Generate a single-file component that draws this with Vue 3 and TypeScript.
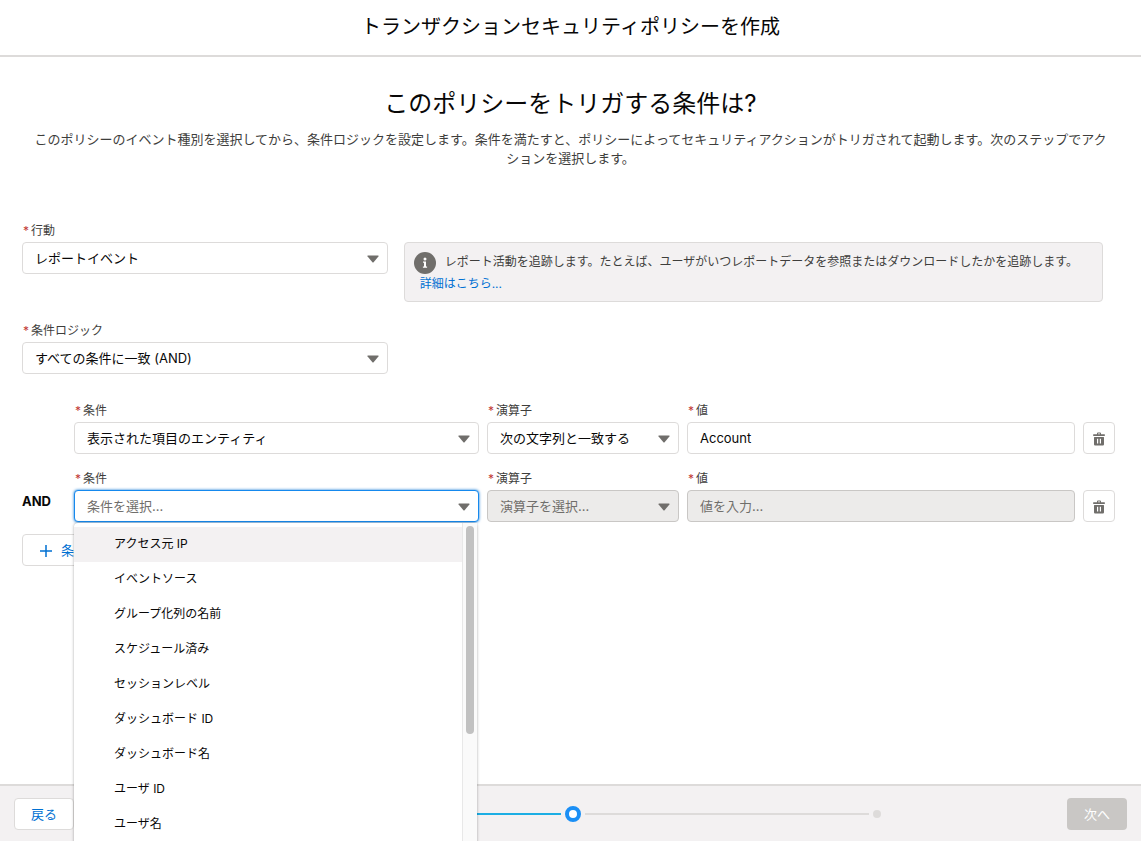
<script setup lang="ts">
import { ref } from 'vue'

interface Condition {
  id: number
  joiner: string
  field: string
  operator: string
  value: string
  open: boolean
}

const action = ref('レポートイベント')
const logic = ref('すべての条件に一致 (AND)')

const conditions = ref<Condition[]>([
  { id: 1, joiner: '', field: '表示された項目のエンティティ', operator: '次の文字列と一致する', value: 'Account', open: false },
  { id: 2, joiner: 'AND', field: '', operator: '', value: '', open: true },
])

const fields: string[] = [
  'アクセス元 IP',
  'イベントソース',
  'グループ化列の名前',
  'スケジュール済み',
  'セッションレベル',
  'ダッシュボード ID',
  'ダッシュボード名',
  'ユーザ ID',
  'ユーザ名',
]

const highlighted = ref(0)

function choose(condition: Condition, name: string) {
  condition.field = name
  condition.open = false
}

function remove(id: number) {
  conditions.value = conditions.value.filter((c) => c.id !== id)
}

function add() {
  conditions.value.push({ id: Date.now(), joiner: 'AND', field: '', operator: '', value: '', open: false })
}
</script>

<template>
  <div class="page">
    <header class="top">
      <h1>トランザクションセキュリティポリシーを作成</h1>
    </header>

    <main class="content">
      <h2>このポリシーをトリガする条件は?</h2>
      <p class="lead">このポリシーのイベント種別を選択してから、条件ロジックを設定します。条件を満たすと、ポリシーによってセキュリティアクションがトリガされて起動します。次のステップでアクションを選択します。</p>

      <form class="form" @submit.prevent>
        <div class="row">
          <div class="field third">
            <label for="action"><span class="req">*</span>行動</label>
            <div class="control">
              <select id="action" v-model="action">
                <option>レポートイベント</option>
              </select>
              <svg class="caret" viewBox="0 0 12 8" aria-hidden="true"><path d="M1 .5h10c.5 0 .7.5.4.9L6.6 7.2a.8.8 0 0 1-1.2 0L.6 1.4C.3 1 .5.5 1 .5z" /></svg>
            </div>
          </div>
          <aside class="info">
            <div class="info-line">
              <svg class="info-icon" viewBox="0 0 22 22" aria-hidden="true">
                <circle cx="11" cy="11" r="11" fill="#706e6b" />
                <circle cx="11" cy="6.9" r="1.5" fill="#fff" />
                <path d="M9 9.5h3v5h1.1v1.3H8.900v-1.300H10v-3.700H9z" fill="#fff" />
              </svg>
              <p>レポート活動を追跡します。たとえば、ユーザがいつレポートデータを参照またはダウンロードしたかを追跡します。</p>
            </div>
            <a href="#">詳細はこちら...</a>
          </aside>
        </div>

        <div class="row">
          <div class="field third">
            <label for="logic"><span class="req">*</span>条件ロジック</label>
            <div class="control">
              <select id="logic" v-model="logic">
                <option>すべての条件に一致 (AND)</option>
              </select>
              <svg class="caret" viewBox="0 0 12 8" aria-hidden="true"><path d="M1 .5h10c.5 0 .7.5.4.9L6.6 7.2a.8.8 0 0 1-1.2 0L.6 1.4C.3 1 .5.5 1 .5z" /></svg>
            </div>
          </div>
        </div>

        <div class="conditions">
          <div v-for="c in conditions" :key="c.id" class="condition">
            <span class="joiner">{{ c.joiner }}</span>
            <div class="field">
              <label :for="`field-${c.id}`"><span class="req">*</span>条件</label>
              <div class="control">
                <select :id="`field-${c.id}`" v-model="c.field" :class="{ active: c.open, empty: !c.field }">
                  <option value="">条件を選択...</option>
                  <option>表示された項目のエンティティ</option>
                  <option v-for="f in fields" :key="f">{{ f }}</option>
                </select>
                <svg class="caret" viewBox="0 0 12 8" aria-hidden="true"><path d="M1 .5h10c.5 0 .7.5.4.9L6.6 7.2a.8.8 0 0 1-1.2 0L.6 1.4C.3 1 .5.5 1 .5z" /></svg>
                <div v-if="c.open" class="menu">
                  <ul role="listbox" aria-label="条件">
                    <li
                      v-for="(f, i) in fields"
                      :key="f"
                      role="option"
                      :aria-selected="i === highlighted"
                      :class="{ highlighted: i === highlighted }"
                      @mouseenter="highlighted = i"
                      @click="choose(c, f)"
                    >{{ f }}</li>
                  </ul>
                  <div class="track"><div class="thumb"></div></div>
                </div>
              </div>
            </div>
            <div class="field">
              <label :for="`operator-${c.id}`"><span class="req">*</span>演算子</label>
              <div class="control">
                <select :id="`operator-${c.id}`" v-model="c.operator" :disabled="!c.field">
                  <option value="">演算子を選択...</option>
                  <option>次の文字列と一致する</option>
                </select>
                <svg class="caret" viewBox="0 0 12 8" aria-hidden="true"><path d="M1 .5h10c.5 0 .7.5.4.9L6.6 7.2a.8.8 0 0 1-1.2 0L.6 1.4C.3 1 .5.5 1 .5z" /></svg>
              </div>
            </div>
            <div class="field">
              <label :for="`value-${c.id}`"><span class="req">*</span>値</label>
              <input :id="`value-${c.id}`" v-model="c.value" type="text" placeholder="値を入力..." :disabled="!c.field" />
            </div>
            <button class="trash" type="button" aria-label="削除" @click="remove(c.id)">
              <svg viewBox="0 0 12 14" aria-hidden="true">
                <path fill-rule="evenodd" d="M4 2.300V1.500C4 .9 4.500.4 5.100.4h1.800C7.500.4 8 .9 8 1.500v.8h3.400c.3 0 .5.2.5.5v.7c0 .3-.2.5-.5.5H.6c-.3 0-.5-.2-.5-.5v-.7c0-.3.2-.5.5-.5zM5 2.300h2v-.8H5zM1.500 5h9c.3 0 .5.2.5.5v6.700c0 .8-.6 1.400-1.400 1.400H2.400C1.600 13.600 1 13 1 12.200V5.500c0-.3.2-.5.5-.5zM4 6.800v4.700h1.200V6.800zM6.800 6.800v4.700H8V6.800z" />
              </svg>
            </button>
          </div>
        </div>

        <button class="outline add" type="button" @click="add">
          <svg viewBox="0 0 14 14" aria-hidden="true"><path d="M7 2v12M1 8h12" /></svg>条件を追加
        </button>
      </form>
    </main>

    <footer class="bottom">
      <button class="outline" type="button">戻る</button>
      <div class="progress" role="progressbar" aria-valuemin="1" aria-valuemax="3" aria-valuenow="2" aria-label="ステップ">
        <span class="dot done"></span>
        <span class="bar done"></span>
        <span class="dot current"></span>
        <span class="bar"></span>
        <span class="dot"></span>
      </div>
      <button class="next" type="button" disabled>次へ</button>
    </footer>
  </div>
</template>

<style>
body {
  margin: 0;
}
</style>

<style scoped>
* {
  box-sizing: border-box;
}

.page {
  display: flex;
  flex-direction: column;
  height: 100vh;
  overflow: hidden;
  background: #fff;
  color: #080707;
  font-family: Inter, "Noto Sans CJK JP", sans-serif;
  font-size: 13px;
  line-height: 20px;
}

.top {
  padding: 12px 16px 13px;
  border-bottom: 2px solid #dddbda;
  text-align: center;
}

h1,
h2,
p {
  margin: 0;
  font-weight: 400;
}

h1 {
  font-size: 20px;
  line-height: 30px;
}

.content {
  flex: 1;
  padding: 31px 22px 0;
}

h2 {
  font-size: 24px;
  line-height: 32px;
  text-align: center;
}

.lead {
  padding: 10px 10px 0;
  line-height: 19px;
  color: #3e3e3c;
  text-align: center;
}

.form {
  padding-top: 53px;
}

.row {
  display: flex;
  align-items: flex-start;
  gap: 16px;
  padding-right: 16px;
}

.row + .row {
  margin-top: 19px;
}

.third {
  flex: none;
  width: calc((100% + 16px) / 3);
}

label {
  display: block;
  margin-bottom: 1px;
  padding-left: 1px;
  font-size: 12px;
  line-height: 20px;
  color: #3e3e3c;
}

.req {
  margin-right: 2px;
  color: #c23934;
}

.control {
  position: relative;
}

select,
input {
  display: block;
  width: 100%;
  height: 32px;
  margin: 0;
  padding: 0 12px;
  border: 1px solid #dddbda;
  border-radius: 4px;
  outline: none;
  appearance: none;
  background: #fff;
  color: #080707;
  font: inherit;
  opacity: 1;
}

select {
  padding-right: 28px;
}

select.empty,
input::placeholder {
  color: #706e6b;
}

select.active {
  border-color: #1589ee;
  box-shadow: 0 0 3px #0070d2;
}

select:disabled,
input:disabled {
  border-color: #c9c7c5;
  background: #ecebea;
  color: #706e6b;
}

.caret {
  position: absolute;
  top: 13px;
  right: 9px;
  width: 12px;
  height: 8px;
  fill: #706e6b;
  pointer-events: none;
}

.info {
  flex: 1;
  margin-top: 21px;
  padding: 9px 9px 7px;
  border: 1px solid #dddbda;
  border-radius: 4px;
  background: #f3f1f2;
  color: #3e3e3c;
  font-size: 12px;
}

.info-line {
  display: flex;
  align-items: flex-start;
  gap: 9px;
}

.info-line p {
  line-height: 20px;
}

.info-icon {
  flex: none;
  width: 22px;
  height: 22px;
}

.info a {
  display: block;
  padding-left: 6px;
  color: #0070d2;
  text-decoration: none;
}

.conditions {
  display: grid;
  gap: 15px;
  margin-top: 27px;
  padding-right: 4px;
}

.condition {
  display: grid;
  grid-template-columns: 44px minmax(0, 405fr) minmax(0, 192fr) minmax(0, 388fr) 32px;
  gap: 8px;
  align-items: end;
}

.joiner {
  padding-bottom: 11px;
  font-weight: 700;
}

button {
  margin: 0;
  font: inherit;
  cursor: pointer;
}

.trash {
  display: flex;
  align-items: center;
  justify-content: center;
  width: 32px;
  height: 32px;
  padding: 2px 0 0;
  border: 1px solid #dddbda;
  border-radius: 4px;
  background: #fff;
}

.trash svg {
  width: 12px;
  height: 14px;
  fill: #706e6b;
}

.outline {
  height: 32px;
  padding: 0 16px 1px;
  border: 1px solid #dddbda;
  border-radius: 4px;
  background: #fff;
  color: #0070d2;
}

.add {
  display: flex;
  align-items: center;
  gap: 8px;
  margin-top: 12px;
}

.add svg {
  width: 14px;
  height: 14px;
  fill: none;
  stroke: #0070d2;
  stroke-width: 1.5;
}

.menu {
  position: absolute;
  z-index: 10;
  top: 33px;
  left: 0;
  right: 2px;
  display: flex;
  height: 360px;
  border-radius: 4px;
  background: #fff;
  box-shadow: 0 0 3px rgba(0, 0, 0, 0.35);
}

.menu ul {
  flex: 1;
  margin: 0;
  padding: 4px 0;
  list-style: none;
}

.menu li {
  height: 35px;
  padding-left: 40px;
  font-size: 12px;
  line-height: 34px;
  cursor: pointer;
}

.menu li.highlighted {
  background: #f3f1f2;
}

.track {
  width: 15px;
  padding: 3px 3px 0;
  border-left: 1px solid #e8e8e8;
  background: #fafafa;
}

.thumb {
  height: 208px;
  border-radius: 4px;
  background: #c1c1c1;
}

.bottom {
  display: flex;
  align-items: center;
  padding: 12px 14px 11px;
  border-top: 2px solid #dddbda;
  background: #f3f1f2;
}

.progress {
  flex: 1;
  display: flex;
  align-items: center;
  gap: 4px;
  margin: 0 186px 0 191px;
}

.dot {
  flex: none;
  width: 8px;
  height: 8px;
  border-radius: 50%;
  background: #dddbda;
}

.bar {
  flex: 1;
  height: 2px;
  background: #dddbda;
}

.dot.done,
.bar.done {
  background: #1baee4;
}

.dot.current {
  width: 16px;
  height: 16px;
  border: 4px solid #1b8ff5;
  background: #fff;
}

.next {
  height: 32px;
  padding: 0 17px;
  border: 0;
  border-radius: 4px;
  background: #c9c7c5;
  color: #fff;
}
</style>
